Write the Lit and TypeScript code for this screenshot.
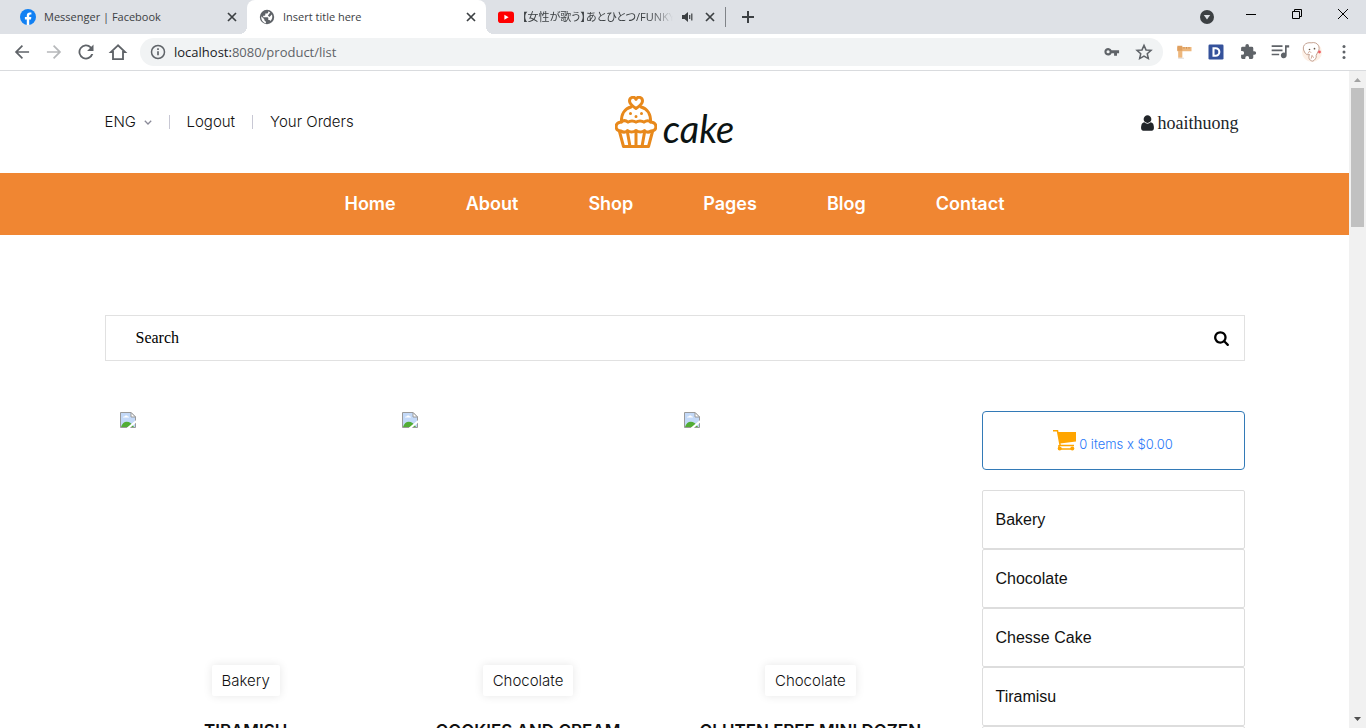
import { LitElement, html, css, svg } from "lit";
import { customElement } from "lit/decorators.js";

const closeIcon = html`<svg width="16" height="16" viewBox="0 0 16 16"><path d="M4 4l8 8M12 4l-8 8" stroke="#3c4043" stroke-width="1.7" fill="none"/></svg>`;

@customElement("browser-tabs")
class BrowserTabs extends LitElement {
  static styles = css`
    :host { display: flex; height: 34px; background: #dee1e6; padding-left: 8px; font: 11px/16px "Open Sans", "Noto Sans CJK JP", sans-serif; color: #3c4043; }
    svg { display: block; flex: none; }
    button { border: 0; padding: 0; background: none; display: flex; align-items: center; justify-content: center; }
    .tab { position: relative; display: flex; align-items: center; flex: 0 1 239px; min-width: 0; box-sizing: border-box; padding: 0 7px 0 12px; gap: 8px; }
    .active { background: #fff; border-radius: 8px 8px 0 0; }
    .active::before, .active::after { content: ""; position: absolute; bottom: 0; width: 8px; height: 8px; }
    .active::before { left: -8px; background: radial-gradient(circle at 0 0, transparent 8px, #fff 8px); }
    .active::after { right: -8px; background: radial-gradient(circle at 100% 0, transparent 8px, #fff 8px); }
    .title { flex: 1; min-width: 0; white-space: nowrap; }
    .faded { -webkit-mask-image: linear-gradient(to right, #000 85%, transparent); mask-image: linear-gradient(to right, #000 85%, transparent); font-feature-settings: "palt"; }
    .divider { align-self: center; width: 1px; height: 20px; background: #808388; }
    .add { width: 44px; }
    .spacer { flex: 1; }
    .search { width: 32px; margin-right: 5px; }
    .win { width: 46px; height: 28px; }
  `;
  render() {
    return html`
      <div class="tab">
        <svg width="16" height="16" viewBox="0 0 16 16"><circle cx="8" cy="8" r="8" fill="#1180f3"/><path d="M6.8 15.9v-5.5H4.9V8.1h1.9V6.5c0-2 1.2-3.1 3-3.1.8 0 1.6.1 1.6.1v1.9h-.9c-1 0-1.3.6-1.3 1.200v1.500h2.100l-.3 2.300H9.200v5.500a8 8 0 0 1-2.400 0z" fill="#fff"/></svg>
        <span class="title">Messenger | Facebook</span>
        <button aria-label="Close tab">${closeIcon}</button>
      </div>
      <div class="tab active">
        <svg width="16" height="16" viewBox="0 0 16 16"><circle cx="8" cy="8" r="7.200" fill="#5f6368"/><path d="M2.300 7.300l3 3v1l1.600 1.500v1.500C4.300 13.800 1.800 11 2.300 7.300zM9.300 2.200v.8c0 .9-.7 1.500-1.500 1.500H6.300V6c0 .4-.3.800-.8.800H4.200v1.400h4.300c.5 0 .8.300.8.800v2h.8c.7 0 1.200.4 1.400 1 1.700-1.800 2.300-4.300 1.400-6.500L10.400 8 8.900 6.600l2.300-3.100z" fill="#fff"/></svg>
        <span class="title">Insert title here</span>
        <button aria-label="Close tab">${closeIcon}</button>
      </div>
      <div class="tab">
        <svg width="16" height="16" viewBox="0 0 16 16"><rect y="2.500" width="16" height="11.500" rx="2.800" fill="#f00"/><path d="M6.400 5.800v4.900l4.200-2.450z" fill="#fff"/></svg>
        <span class="title faded">【女性が歌う】あとひとつ/FUNKY</span>
        <svg width="13" height="12" viewBox="0 0 13 12"><path d="M1 4h2.500L7 1v10L3.500 8H1z" fill="#3c4043"/><path d="M8.700 4v4M10.800 2.500v7" stroke="#3c4043" stroke-width="1.200"/></svg>
        <button aria-label="Close tab">${closeIcon}</button>
      </div>
      <span class="divider"></span>
      <button class="add" aria-label="New tab"><svg width="14" height="14" viewBox="0 0 14 14"><path d="M7 1v12M1 7h12" stroke="#3c4043" stroke-width="2"/></svg></button>
      <span class="spacer"></span>
      <button class="search" aria-label="Search tabs"><svg width="14" height="14" viewBox="0 0 14 14"><circle cx="7" cy="7" r="7" fill="#3c4043"/><path d="M3.800 5h6.400L7 9.500z" fill="#dee1e6"/></svg></button>
      <button class="win" aria-label="Minimize"><svg width="10" height="10" viewBox="0 0 10 10"><path d="M0 5.500h10" stroke="#000"/></svg></button>
      <button class="win" aria-label="Restore"><svg width="10" height="10" viewBox="0 0 10 10"><path d="M.5 2.500h7v7h-7zM2.500 2.500v-2h7v7h-2" fill="none" stroke="#000"/></svg></button>
      <button class="win" aria-label="Close"><svg width="10" height="10" viewBox="0 0 10 10"><path d="M0 0l10 10M10 0L0 10" stroke="#000"/></svg></button>
    `;
  }
}

const tool = (label: string, body: unknown) => html`<button class="cell" aria-label=${label}><svg width="20" height="20" viewBox="0 0 24 24" fill="#5f6368">${body}</svg></button>`;

@customElement("browser-toolbar")
class BrowserToolbar extends LitElement {
  static styles = css`
    :host { display: flex; align-items: center; height: 36px; padding: 0 6px; background: #fff; border-bottom: 1px solid #d9dbde; }
    svg { display: block; }
    .cell { flex: none; width: 32px; height: 28px; border: 0; padding: 0; background: none; display: flex; align-items: center; justify-content: center; }
    .address { flex: 1; min-width: 0; display: flex; align-items: center; height: 28px; margin: 0 5px 0 6px; padding: 0 3px 0 2px; border-radius: 14px; background: #f1f3f4; }
    .url { flex: 1; font: 13px/18px "Open Sans", sans-serif; color: #5f6368; white-space: nowrap; overflow: hidden; }
    .host { color: #202124; }
    .off { opacity: 0.45; }
  `;
  render() {
    return html`
      ${tool("Back", svg`<path d="M20.500 11H7.300l5.900-6L11.800 3.600 3.400 12l8.400 8.400 1.400-1.400-5.900-6h13.200z"/>`)}
      <span class="off">${tool("Forward", svg`<path d="M3.500 11h13.200l-5.900-6 1.400-1.400 8.400 8.400-8.400 8.400-1.400-1.400 5.900-6H3.500z"/>`)}</span>
      ${tool("Reload", svg`<path d="M18.400 5.600A9 9 0 1 0 20.700 14.500h-2.400A6.800 6.800 0 1 1 16.800 7.200L13.300 10.700H21V3z"/>`)}
      ${tool("Home", svg`<path d="M12 4L3.500 12H6v8.500h12V12h2.500z" fill="none" stroke="#5f6368" stroke-width="2.200"/>`)}
      <div class="address">
        ${tool("Site information", svg`<circle cx="12" cy="12" r="7.800" fill="none" stroke="#5f6368" stroke-width="1.800"/><path d="M11 11h2v5h-2zM11 7.500h2v2h-2z"/>`)}
        <span class="url"><span class="host">localhost:</span>8080/product/list</span>
        ${tool("Passwords", svg`<path fill-rule="evenodd" d="M11.500 10a4.500 4.500 0 1 0 0 3.500h3v3h3.500v-3h2.500V10zM7.300 13.600a1.900 1.900 0 1 1 0-3.800 1.900 1.900 0 0 1 0 3.800z"/>`)}
        ${tool("Bookmark", svg`<path d="M12 4l2.400 5.500 6 .5-4.500 4 1.300 5.900L12 16.800 6.800 19.900 8.100 14l-4.500-4 6-.5z" fill="none" stroke="#5f6368" stroke-width="1.800"/>`)}
      </div>
      ${tool("Ruler extension", svg`<path d="M4 6h17v5H10v8H5v-8H4z" fill="#edb77d"/><path d="M4 4.500h6v6H4z" fill="#e0a060"/><path d="M12 6v2M15 6v2M18 6v2" fill="none" stroke="#c98a4c"/><path d="M5 19.500h7" stroke="#d8d4d0"/>`)}
      ${tool("Dictionary extension", svg`<rect x="3" y="3" width="18" height="18" rx="1.500" fill="#35529b"/><path d="M9 7.500h2.500a4.500 4.500 0 0 1 0 9H9z" fill="none" stroke="#fff" stroke-width="2.500"/>`)}
      ${tool("Extensions", svg`<path d="M20.500 11H19V7a2 2 0 0 0-2-2h-4V3.500a2.500 2.500 0 0 0-5 0V5H4a2 2 0 0 0-2 2v3.800h1.500a2.700 2.700 0 0 1 0 5.400H2V20c0 1.100.9 2 2 2h3.800v-1.500a2.700 2.700 0 0 1 5.400 0V22H17a2 2 0 0 0 2-2v-4h1.500a2.500 2.500 0 0 0 0-5z" transform="translate(2 1.500) scale(.86)"/>`)}
      ${tool("Media", svg`<path d="M2 4h13v2H2zM2 9h13v2H2zM2 14h9v2H2zM18 4h5v2.500h-3V16a3.500 3.500 0 1 1-2-3.100z"/>`)}
      ${tool("Profile", svg`<circle cx="12" cy="12" r="12" fill="#fdf0e6"/><path d="M3 12C-1 5 4 0 11 1c8-2 12 6 8 11l-2 4c1 3-2 6-4 7-6-1-5-6-4-8-3 1-5-1-6-3z" fill="#fff" stroke="#b8917f"/><circle cx="9" cy="9" r="1" fill="#654"/><circle cx="15" cy="8" r="1" fill="#654"/><path d="M7 14l2-3 2 2M11 20l1-4 2 3" fill="none" stroke="#c99c8a"/><circle cx="21" cy="12" r="1.700" fill="#ef5960"/>`)}
      ${tool("Menu", svg`<circle cx="12" cy="5.500" r="1.800"/><circle cx="12" cy="12" r="1.800"/><circle cx="12" cy="18.500" r="1.800"/>`)}
    `;
  }
}

@customElement("shop-header")
class ShopHeader extends LitElement {
  static styles = css`
    :host { display: block; }
    a { color: inherit; text-decoration: none; }
    svg { display: block; flex: none; }
    .bar { max-width: 1140px; height: 102px; margin: 0 auto; display: grid; grid-template-columns: 1fr auto 1fr; align-items: center; }
    .links { display: flex; align-items: center; font: 300 15px/20px Inter, sans-serif; color: #111; }
    .lang { display: flex; align-items: center; gap: 7px; }
    select { appearance: none; border: 0; padding: 0; margin: 0; background: none; font: inherit; color: inherit; }
    .sep { width: 1px; height: 14px; margin: 0 17px; background: #c8c8d4; }
    .logo { display: flex; align-items: flex-end; gap: 6px; }
    .brand { font: italic 38px/42px Lato, sans-serif; color: #0c1414; }
    .user { justify-self: end; display: flex; align-items: center; gap: 4px; padding: 2px 6px 0 0; font: 18px/24px "Liberation Serif", serif; color: #212529; }
    .menu { display: flex; justify-content: center; align-items: center; gap: 70px; height: 62px; background: #f08632; color: #fff; font: 600 18px/24px Inter, sans-serif; }
  `;
  render() {
    return html`
      <div class="bar">
        <div class="links">
          <span class="lang"><select aria-label="Language"><option>ENG</option></select>
          <svg width="8" height="5" viewBox="0 0 8 5"><path d="M.8.8L4 4 7.200.8" fill="none" stroke="#8a8a98" stroke-width="1.300"/></svg></span>
          <span class="sep"></span><a href="#logout">Logout</a>
          <span class="sep"></span><a href="#orders">Your Orders</a>
        </div>
        <a class="logo" href="#home">
          <svg width="42" height="53" viewBox="0 0 42 53" fill="none" stroke="#e8891c" stroke-width="3" stroke-linecap="round" stroke-linejoin="round">
            <path d="M21 12.500c-3-2-6.500-4.500-6.500-7.500 0-4 5-5 6.500-1.700C22.500 0 27.500 1 27.500 5c0 3-3.500 5.500-6.500 7.500z"/>
            <path d="M6.500 26C6 18 10 12.500 16 11M35.500 26C36 18 32 12.500 26 11"/>
            <path d="M6 26c2.500-2 5-1.500 7 .2 2-1.700 6-1.700 8 0 2-1.700 6-1.700 8 0 2-1.700 5-1.700 7-.2 6.500 1 6.500 8.500 0 9-2 1.500-4.500 1.500-6.500-.5-2 2-6 2-8.500 0-2.500 2-6.500 2-8.500 0-2 2-4.500 2-6.500.5-6.500-.5-6.500-8 0-9z"/>
            <path d="M4.500 35.500l4 15h25l4-15M12.500 36.500l2.500 14M21 36.500v14M29.500 36.500l-2.500 14"/>
            <path d="M15.500 17.500v.1M26.500 17.500v.1M21 20.500v.1" stroke-width="3"/>
          </svg>
          <span class="brand">cake</span>
        </a>
        <div class="user">
          <svg width="13" height="18" viewBox="0 0 1280 1792" fill="#212529"><path d="M1280 1399q0 109-62.500 187t-150.500 78h-854q-88 0-150.500-78t-62.500-187q0-85 8.500-160.500t31.500-152 58.500-131 94-89 134.500-34.500q131 128 313 128t313-128q76 0 134.500 34.500t94 89 58.500 131 31.500 152 8.500 160.500zm-256-887q0 159-112.500 271.500t-271.500 112.500-271.500-112.500-112.500-271.500 112.500-271.500 271.500-112.500 271.500 112.500 112.500 271.500z"/></svg>
          <span>hoaithuong</span>
        </div>
      </div>
      <nav class="menu">
        ${["Home", "About", "Shop", "Pages", "Blog", "Contact"].map((t) => html`<a href="#${t.toLowerCase()}">${t}</a>`)}
      </nav>
    `;
  }
}

@customElement("product-list")
class ProductList extends LitElement {
  static styles = css`
    :host { display: block; max-width: 1140px; margin: 80px auto 0; }
    a { color: inherit; text-decoration: none; }
    svg { display: block; flex: none; }
    .search { display: flex; box-sizing: border-box; height: 46px; border: 1px solid #e1e1e1; padding: 0 15px 0 30px; }
    input { flex: 1; min-width: 0; border: 0; padding: 0; outline: 0; background: none; font: 16px/20px "Liberation Serif", serif; color: #000; }
    input::placeholder { color: #000; opacity: 1; }
    .search button { border: 0; background: none; padding: 0; display: flex; align-items: center; }
    .columns { display: grid; grid-template-columns: 847fr 263fr; gap: 30px; margin-top: 50px; }
    .products { display: grid; grid-template-columns: repeat(3, 1fr); }
    .card { padding: 0 15px; display: flex; flex-direction: column; align-items: center; }
    .photo { align-self: stretch; height: 253px; padding-top: 1px; }
    .tag { padding: 0 10px; border-radius: 2px; background: #fff; box-shadow: 0 0 10px rgba(0, 0, 0, 0.1); font: 300 15px/31px Inter, sans-serif; color: #111; }
    .name { margin: 24px 0 0; font: 600 17px/22px Inter, sans-serif; color: #111; white-space: nowrap; }
    .cart { display: flex; justify-content: center; align-items: center; gap: 2px; box-sizing: border-box; height: 59px; margin-bottom: 20px; border: 1px solid #337ab7; border-radius: 4px; font: 300 13px/20px Inter, sans-serif; color: #2878f8; }
    .total { padding-top: 6px; }
    .category { display: block; box-sizing: border-box; height: 59px; padding: 0 13px; border: 1px solid #ddd; border-radius: 2px; font: 16px/57px "Liberation Sans", sans-serif; color: #111; }
  `;
  private products = [["Bakery", "TIRAMISU"], ["Chocolate", "COOKIES AND CREAM"], ["Chocolate", "GLUTEN FREE MINI DOZEN"]];
  private categories = ["Bakery", "Chocolate", "Chesse Cake", "Tiramisu", ""];
  render() {
    return html`
      <form class="search">
        <input type="text" placeholder="Search" aria-label="Search" />
        <button type="button" aria-label="Submit search"><svg width="15" height="16" viewBox="0 0 1664 1792"><path d="M1152 832q0-185-131.500-316.500t-316.500-131.500-316.500 131.500-131.500 316.500 131.500 316.500 316.500 131.500 316.500-131.500 131.500-316.500zm512 832q0 52-38 90t-90 38q-54 0-90-38l-343-342q-179 124-399 124-143 0-273.500-55.500t-225-150-150-225-55.500-273.500 55.500-273.500 150-225 225-150 273.500-55.500 273.500 55.500 225 150 150 225 55.500 273.500q0 220-124 399l343 343q37 37 37 90z"/></svg></button>
      </form>
      <div class="columns">
        <div class="products">
          ${this.products.map(([tag, name]) => html`
            <article class="card">
              <div class="photo"><svg width="16" height="16" viewBox="0 0 16 16"><path d="M.5.500h10.500l4.500 4.500v10.500H.5z" fill="#c3d9f8" stroke="#9a9a9a"/><path d="M3 5.500c0-1 1-1.200 1.500-1 .5-1.500 3-1.500 3.300 0 1 0 1.200.6 1.200 1z" fill="#fff"/><path d="M1 15c2-7 9-7 13 0z" fill="#52ad35"/><path d="M11 .5V5h4.500z" fill="#fff" stroke="#9a9a9a"/><path d="M7.500 16.500L16.500 9" stroke="#fff" stroke-width="2.200"/></svg></div>
              <span class="tag">${tag}</span>
              <h2 class="name">${name}</h2>
            </article>`)}
        </div>
        <aside>
          <a class="cart" href="#cart">
            <svg width="24" height="21" viewBox="0 0 24 21"><path d="M4.500 2H23v9.500L7 13.500z" fill="orange"/><path d="M0 .8h4.500L7 14.500v1h14M6 15v4h14" fill="none" stroke="orange" stroke-width="1.500"/><circle cx="6.700" cy="18.500" r="2" fill="orange"/><circle cx="19.300" cy="18.500" r="2" fill="orange"/></svg>
            <span class="total">0 items x $0.00</span>
          </a>
          ${this.categories.map((c) => html`<a class="category" href="#category">${c}</a>`)}
        </aside>
      </div>
    `;
  }
}

@customElement("app-root")
class AppRoot extends LitElement {
  static styles = css`
    :host { display: flex; flex-direction: column; height: 100vh; overflow: hidden; background: #fff; }
    browser-tabs, browser-toolbar { flex: none; }
    .view { flex: 1; min-height: 0; display: flex; }
    .page { flex: 1; min-width: 0; overflow: hidden; }
    .scroll { flex: none; width: 17px; display: flex; flex-direction: column; align-items: center; background: #f1f1f1; }
    .scroll svg { display: block; flex: none; }
    .track { flex: 1; width: 13px; }
    .thumb { height: 22.3%; background: #c1c1c1; }
  `;
  render() {
    return html`
      <browser-tabs></browser-tabs>
      <browser-toolbar></browser-toolbar>
      <div class="view">
        <div class="page"><shop-header></shop-header><product-list></product-list></div>
        <div class="scroll">
          <svg width="17" height="17" viewBox="0 0 17 17"><path d="M5 11h7L8.500 7z" fill="#a3a3a3"/></svg>
          <div class="track"><div class="thumb"></div></div>
          <svg width="17" height="17" viewBox="0 0 17 17"><path d="M5 6h7l-3.500 4z" fill="#505050"/></svg>
        </div>
      </div>
    `;
  }
}
